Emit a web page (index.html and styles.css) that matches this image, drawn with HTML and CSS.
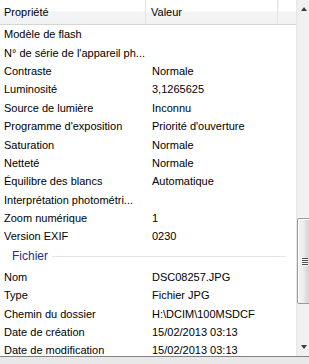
FILE: index.html
```html
<!DOCTYPE html>
<html lang="fr">
<head>
<meta charset="utf-8">
<link rel="stylesheet" href="styles.css">
</head>
<body>
<div class="pane">
  <div class="list">
    <div class="header">
      <div class="hcell name">Propriété</div>
      <div class="hcell value">Valeur</div>
      <div class="hcell filler"></div>
    </div>
    <div class="rows">
      <div class="row"><span class="k">Modèle de flash</span><span class="v"></span></div>
      <div class="row"><span class="k">N° de série de l'appareil ph...</span><span class="v"></span></div>
      <div class="row"><span class="k">Contraste</span><span class="v">Normale</span></div>
      <div class="row"><span class="k">Luminosité</span><span class="v">3,1265625</span></div>
      <div class="row"><span class="k">Source de lumière</span><span class="v">Inconnu</span></div>
      <div class="row"><span class="k">Programme d'exposition</span><span class="v">Priorité d'ouverture</span></div>
      <div class="row"><span class="k">Saturation</span><span class="v">Normale</span></div>
      <div class="row"><span class="k">Netteté</span><span class="v">Normale</span></div>
      <div class="row"><span class="k">Équilibre des blancs</span><span class="v">Automatique</span></div>
      <div class="row"><span class="k">Interprétation photométri...</span><span class="v"></span></div>
      <div class="row"><span class="k">Zoom numérique</span><span class="v">1</span></div>
      <div class="row"><span class="k">Version EXIF</span><span class="v">0230</span></div>
      <div class="group"><span class="gtitle">Fichier</span><span class="gline"></span></div>
      <div class="row"><span class="k">Nom</span><span class="v">DSC08257.JPG</span></div>
      <div class="row"><span class="k">Type</span><span class="v">Fichier JPG</span></div>
      <div class="row"><span class="k">Chemin du dossier</span><span class="v">H:\DCIM\100MSDCF</span></div>
      <div class="row"><span class="k">Date de création</span><span class="v">15/02/2013 03:13</span></div>
      <div class="row"><span class="k">Date de modification</span><span class="v">15/02/2013 03:13</span></div>
    </div>
  </div>
  <div class="scrollbar">
    <div class="arrow up"></div>
    <div class="track top"></div>
    <div class="thumb"><div class="grip"><i></i><i></i><i></i><i></i></div></div>
    <div class="track bottom"></div>
    <div class="arrow down"></div>
  </div>
</div>
<div class="footer"></div>
</body>
</html>
```
FILE: styles.css
```css
html, body {
  margin: 0;
  padding: 0;
}
body {
  width: 309px;
  height: 364px;
  overflow: hidden;
  background: #e8e8e8;
  font-family: "Liberation Sans", Arial, sans-serif;
  font-size: 11px;
  color: #000;
}
.pane {
  display: flex;
  width: 313px;
  height: 356px;
  background: #fff;
  border-bottom: 1px solid #828282;
}
.list {
  width: 296px;
  flex: none;
  display: flex;
  flex-direction: column;
  overflow: hidden;
}
.header {
  display: flex;
  height: 24px;
  flex: none;
  border-bottom: 1px solid #d5d5d5;
  background: linear-gradient(#ffffff 0%, #ffffff 45%, #f3f4f6 50%, #f1f2f4 100%);
}
.hcell {
  line-height: 24px;
  padding-left: 4px;
  box-sizing: border-box;
  white-space: nowrap;
}
.hcell.name {
  width: 146px;
  border-right: 1px solid #e3e5e8;
}
.hcell.value {
  width: 132px;
  padding-left: 5px;
  border-right: 1px solid #e3e5e8;
}
.hcell.filler {
  flex: 1;
  border-left: 1px solid #f4f4f4;
}
.rows {
  display: flex;
  flex-direction: column;
}
.row {
  display: flex;
  height: 18.4px;
  align-items: center;
  white-space: nowrap;
}
.k {
  width: 148px;
  padding-left: 4px;
  box-sizing: border-box;
  overflow: hidden;
}
.v {
  padding-left: 4px;
}
.group {
  display: flex;
  align-items: center;
  height: 22px;
  padding-left: 12px;
  padding-right: 10px;
  gap: 4px;
}
.gtitle {
  color: #1e3287;
  font-size: 12px;
  margin-top: -2px;
}
.gline {
  flex: 1;
  height: 1px;
  background: #e2e6ee;
}
.scrollbar {
  width: 17px;
  flex: none;
  display: flex;
  flex-direction: column;
  background: linear-gradient(90deg, #e6e6e6 0px, #f0f0f0 2px, #f3f3f3 100%);
}
.arrow {
  height: 17px;
  flex: none;
  position: relative;
}
.arrow::after {
  content: "";
  position: absolute;
  left: 5px;
  width: 0;
  height: 0;
  border-left: 3.5px solid transparent;
  border-right: 3.5px solid transparent;
}
.arrow.up::after {
  top: 7px;
  border-bottom: 4px solid #3c3c3c;
}
.arrow.down::after {
  top: 6px;
  border-top: 4px solid #3c3c3c;
}
.track.top {
  height: 201px;
  flex: none;
}
.track.bottom {
  flex: 1;
}
.thumb {
  height: 86px;
  flex: none;
  box-sizing: border-box;
  border: 1px solid #9a9a9a;
  border-radius: 2px;
  margin-left: 1px;
  background: linear-gradient(90deg, #f4f4f4 0%, #ececec 40%, #dcdcdc 60%, #d2d2d2 100%);
  box-shadow: inset 1px 1px 0 #fff;
  display: flex;
  align-items: center;
  justify-content: center;
}
.grip {
  display: flex;
  flex-direction: column;
  gap: 1px;
  margin-left: -1px;
}
.grip i {
  display: block;
  width: 6px;
  height: 1px;
  background: #4e4e4e;
  box-shadow: 0 1px 0 #fafafa;
}
.footer {
  height: 7px;
}
```
